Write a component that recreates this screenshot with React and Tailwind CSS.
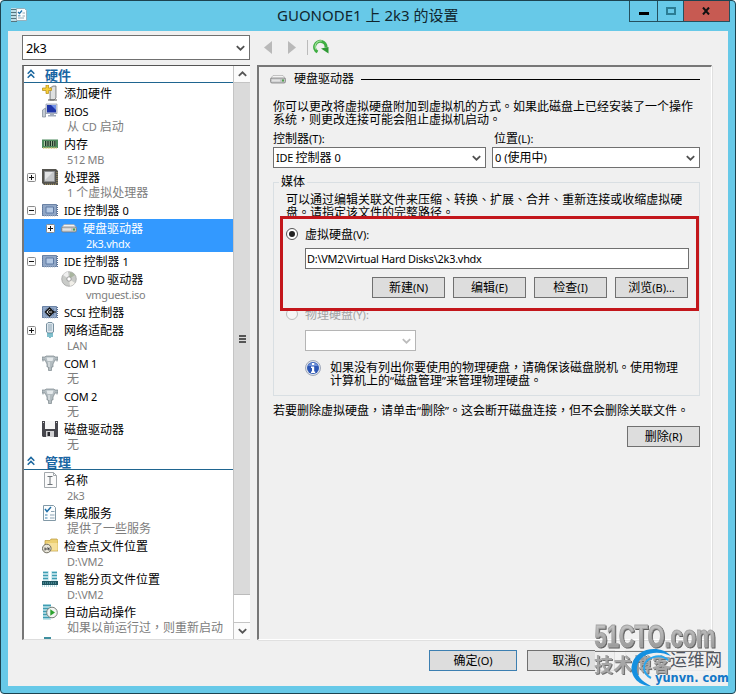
import React from 'react';
import clsx from 'clsx';

/**
 * Mixed-script label. Latin runs are set a little smaller than the CJK glyphs
 * and full-width punctuation is centred in its cell.
 */
function Txt({ children }) {
  return children
    .split(/([，。、]|[\x20-\x7e“”]+)/)
    .filter(Boolean)
    .map((part, i) => {
      if (/^[，。、]$/.test(part)) {
        return (
          <span key={i} className="font-['Noto_Sans_CJK_TC',sans-serif] leading-none" lang="zh-TW">
            {part}
          </span>
        );
      }
      if (/\w{3}|\w \w/.test(part) || /^[A-Z]:/.test(part)) {
        return (
          <span key={i} className="text-[0.91em] leading-none tracking-[-0.25px]">
            {part}
          </span>
        );
      }
      if (/^[\x20-\x7e“”]/.test(part)) {
        return (
          <span key={i} className="text-[0.92em] leading-none">
            {part}
          </span>
        );
      }
      return part;
    });
}

/* ---------- icons ---------- */

const Svg = ({ children, size = 16 }) => (
  <svg width={size} height={size} viewBox="0 0 16 16" className="block shrink-0">
    {children}
  </svg>
);

const AddIcon = () => (
  <Svg>
    <path d="M8 3l3-2h3v12l-2 2H8z" fill="#c9cdcd" stroke="#777" strokeWidth=".8" />
    <path d="M10 3v11M12 2v12" stroke="#f4f4f4" />
    <path d="M6 15h9" stroke="#555" />
    <path d="M4 0h2.500v3h3v2.500h-3v3H4v-3H.5V3H4z" fill="#f7cf3a" stroke="#b58a10" strokeWidth=".7" />
  </Svg>
);

const BiosIcon = () => (
  <Svg>
    <path d="M.5 7l3-2v9h-3z" fill="#c5ccd4" stroke="#7c8794" strokeWidth=".7" />
    <path d="M4 1h11v9.500H4z" fill="#d7dce6" stroke="#8a93a8" strokeWidth=".7" />
    <path d="M5 2h9v7.500H5z" fill="#1f35a8" />
    <path d="M9 2h5v5z" fill="#6f8fe8" />
    <path d="M8 10.500h4V12h2v1.500H6V12h2z" fill="#a4adbc" />
  </Svg>
);

const MemoryIcon = () => (
  <Svg>
    <path d="M0 3.500h16V12H0z" fill="#4d8a5c" />
    <path d="M1 12h14" stroke="#d6c878" strokeWidth="1.400" strokeDasharray="1 .6" />
    <path d="M2 5h12v5H2z" fill="#a9c6a0" />
    <path d="M3 5h1.400v5H3zM5.300 5h1.400v5H5.300zM7.600 5H9v5H7.600zM9.900 5h1.400v5H9.900zM12.200 5h1.400v5h-1.400z" fill="#1c3325" />
  </Svg>
);

const CpuIcon = () => (
  <Svg>
    <path d="M0 0h14l2 2v14H2l-2-2z" fill="#55544f" />
    <path d="M15 3v12M3 15.300h12" stroke="#b3a26a" strokeDasharray="1 1" />
    <path d="M2.500 2.500h10v10h-10z" fill="#c4c6c8" stroke="#8d8f91" />
    <path d="M3 3h8L3 11z" fill="#e2e3e4" />
  </Svg>
);

const ControllerIcon = ({ scsi }) => (
  <Svg>
    <path d="M.5 2.500h14v11H.5z" fill="#91a7c6" stroke="#6b83a6" />
    <path d="M0 3v11M15.500 3v11" stroke="#566c8d" strokeDasharray="1 1" />
    <path d="M2 14h12" stroke="#b6c3d6" strokeDasharray="1 1" />
    <path d="M4 5h7.500v6H4z" fill="#b4c9e4" stroke="#5f7ba4" />
    {scsi && (
      <>
        <path d="M7.500 4L11.500 8l-4 4-4-4z" fill="#fff" stroke="#111" strokeWidth="1.500" />
        <path d="M9 6.800a1.500 1.500 0 1 0 0 2.400M8 8h6" fill="none" stroke="#111" strokeWidth="1.200" />
      </>
    )}
  </Svg>
);

const DiskIcon = () => (
  <Svg>
    <path d="M3 4.500h10l2.500 3H.5z" fill="#f3f3f3" stroke="#a2a2a2" strokeWidth=".6" />
    <rect x=".5" y="7" width="15" height="5" rx="1.500" fill="#c3c5c6" stroke="#777" strokeWidth=".7" />
    <path d="M2 8.500h8v2H2z" fill="#e3e3e3" />
    <path d="M12 8.500h2v2h-2z" fill="#4fa24a" />
  </Svg>
);

const DvdIcon = () => (
  <Svg>
    <circle cx="8" cy="8" r="7.300" fill="#c9cbc8" stroke="#9c9c9c" strokeWidth=".7" />
    <path d="M8 8L2 4a7 7 0 0 1 5-3.300z" fill="#efefef" />
    <path d="M8 8l6 4a7 7 0 0 1-5 3z" fill="#f1efe9" />
    <path d="M8 8l1-7a7 7 0 0 1 5 3z" fill="#a9b59f" />
    <circle cx="8" cy="8" r="2.200" fill="#fff" stroke="#8a8a8a" strokeWidth=".8" />
  </Svg>
);

const NetworkIcon = () => (
  <Svg>
    <path d="M4.500 2L6 .5h4L11.500 2v8l-1.500 1H6l-1.500-1z" fill="#dde7ee" stroke="#78909f" />
    <path d="M7 2v7M9 2v7" stroke="#8fa5b3" />
    <path d="M6 11v4M8 11v5M10 11v4" stroke="#3d9cb0" strokeWidth="1.300" />
  </Svg>
);

const ComIcon = () => (
  <Svg>
    <path d="M0 2h3l1-1h8l1 1h3v3h-3l-2 4v3H9.500v3.500h-3V12H5V9L3 5H0z" fill="#b3bcc0" stroke="#7b878c" strokeWidth=".7" />
    <path d="M4.500 2.500h7l-1 3.500h-5z" fill="#e4e9eb" />
    <path d="M7 7v5" stroke="#eef1f2" />
    <path d="M1 5v1.500M15 5v1.500" stroke="#8d999e" />
  </Svg>
);

const FloppyIcon = () => (
  <Svg>
    <path d="M0 0h16v16H1l-1-1z" fill="#46464c" />
    <path d="M3 0h10v8H3z" fill="#f6f6f6" />
    <path d="M4 10h8v6H4z" fill="#d2d2d4" />
    <path d="M5.500 11h2.500v4H5.500z" fill="#2b2b30" />
    <path d="M1 1h1v1H1zM14 1h1v1h-1z" fill="#ddd" />
  </Svg>
);

const NameIcon = () => (
  <Svg>
    <path d="M2.500.5h9l3 3v12h-12z" fill="#fbfbfb" stroke="#a3a8ac" />
    <path d="M11.500.5v3h3" fill="none" stroke="#a3a8ac" />
    <path d="M5.500 4.500h5M5.500 12.500h5M8 4.500v8" stroke="#6b7176" />
  </Svg>
);

const ServicesIcon = () => (
  <Svg>
    <path d="M1.500.5h10l2 2v13h-12z" fill="#fbfdfe" stroke="#8299a6" />
    <path d="M3 4l2 2.500L9 2" fill="none" stroke="#1f6fa8" strokeWidth="1.500" />
    <path d="M9 6.500h3.500M8 10h4.500M8 13h4.500" stroke="#8ba3b3" />
    <path d="M3 9h2.500v2H3zM3 12h2.500v2H3z" fill="#9cc0d6" />
  </Svg>
);

const CheckpointIcon = () => (
  <Svg>
    <path d="M3 2.500h5l1-1.500h6l1 1.500V13H3z" fill="#eccf72" stroke="#b8963a" strokeWidth=".7" />
    <path d="M4 5h11.500v7.500H4z" fill="#f6e09a" />
    <circle cx="4.800" cy="10.500" r="4.300" fill="#e9e6da" stroke="#6d6a5c" />
    <path d="M3 12.500V9.500M3 11h4l-1.500-1.500M7 12.500v-3" fill="none" stroke="#444" />
  </Svg>
);

const PagingIcon = () => (
  <Svg>
    <path d="M1 0h6v10H1zM9 0h6v10H9z" fill="#d6eef3" />
    <path d="M1 1.500h5M1 4.500h5M1 7.500h5M10 1.500h5M10 4.500h5M10 7.500h5" stroke="#3f9db2" strokeWidth="1.500" />
    <path d="M0 10h16v4H0z" fill="#1f5560" />
    <path d="M1 12h14M0 15h16" stroke="#6fb9c6" strokeDasharray="1 1" />
  </Svg>
);

const AutoStartIcon = () => (
  <Svg>
    <path d="M1 0h8v16H1z" fill="#c2e4ea" />
    <path d="M1 1.500h8M1 4.500h6M1 7.500h5M1 10.500h5M1 13.500h7" stroke="#3f9db2" strokeWidth="1.500" />
    <circle cx="10" cy="8.500" r="5.300" fill="#f3f5f3" stroke="#76807a" />
    <path d="M8.300 5.300l4.700 3.200-4.700 3.200z" fill="#2ba32e" />
  </Svg>
);

const InfoIcon = () => (
  <Svg>
    <circle cx="8" cy="8" r="7.500" fill="#dfe4ec" stroke="#8b95ab" strokeWidth=".8" />
    <circle cx="8" cy="8" r="6" fill="#2c56b4" />
    <path d="M3 6a5.500 5.500 0 0 1 10 0z" fill="#6d90d8" />
    <path d="M7 3h2.200v2H7zM6 6.500h3.200v5h1V13H6v-1.500h1V8H6z" fill="#fff" />
  </Svg>
);

const SettingsIcon = () => (
  <Svg>
    <path d="M0 1h6v14H0z" fill="#bcdde6" />
    <path d="M0 2.500h6M0 5.500h6M0 8.500h6M0 11.500h6M0 14.500h6" stroke="#55747e" />
    <path d="M5.500 1.500h8l2 2v10h-10z" fill="#fbfdfe" stroke="#8fa5af" strokeWidth=".8" />
    <path d="M7 5l1.500 1.500L11 3.500" fill="none" stroke="#1f6fa8" strokeWidth="1.300" />
    <path d="M11.500 6h2.500M11.500 9h2.500M7 11h6" stroke="#94a9b4" />
    <path d="M7 8h2.500v1.500H7z" fill="#7db0cc" />
  </Svg>
);

const RefreshIcon = () => (
  <Svg>
    <path d="M4.500 13A5.700 5.700 0 1 1 13 8.500" fill="none" stroke="#3fae42" strokeWidth="3" />
    <path d="M3.200 10.500A5.500 5.500 0 0 1 9 2" fill="none" stroke="#a2e09c" strokeWidth="1.200" />
    <path d="M8 9.500l7.500-1.500v6.500z" fill="#2f9a35" />
  </Svg>
);

const Chevron = ({ color = '#505050', up }) => (
  <svg width="9" height="6" viewBox="0 0 9 6" className="block shrink-0">
    <path d={up ? 'M.8 4.800L4.500 1.300l3.700 3.500' : 'M.8 1.200L4.500 4.700l3.700-3.500'} fill="none" stroke={color} strokeWidth="1.800" />
  </svg>
);

/* ---------- controls ---------- */

const Combo = ({ value, disabled, className }) => (
  <div
    className={clsx(
      'flex items-center justify-between border bg-white pl-[2px] pr-[4px]',
      disabled ? 'border-[#b5b5b5]' : 'border-[#707070]',
      className,
    )}
  >
    <span className="whitespace-nowrap">
      <Txt>{value}</Txt>
    </span>
    <Chevron color={disabled ? '#bcbcbc' : '#505050'} />
  </div>
);

const Button = ({ children, className }) => (
  <button
    className={clsx(
      'flex h-[21px] items-center justify-center whitespace-pre border bg-[#dddddd]',
      className || 'w-[73px] border-[#707070]',
    )}
  >
    <span>
      <Txt>{children}</Txt>
    </span>
  </button>
);

const Radio = ({ checked, disabled }) => (
  <span
    className={clsx(
      'mb-[2px] flex size-[12px] shrink-0 items-center justify-center rounded-full border',
      disabled ? 'border-[#bcbcbc] bg-[#f6f6f6]' : 'border-[#555] bg-white',
    )}
  >
    {checked && <span className="size-[6px] rounded-full bg-[#222]" />}
  </span>
);

const Expander = ({ open }) => (
  <svg width="9" height="9" viewBox="0 0 9 9" className="block">
    <rect x=".5" y=".5" width="8" height="8" rx="1" fill="#fafafa" stroke="#8a8a8a" />
    <path d={open ? 'M2 4.500h5' : 'M2 4.500h5M4.500 2v5'} stroke="#111" />
  </svg>
);

// Body copy sits on a tight 13px grid, one block per line
const Lines = ({ lines }) =>
  lines.map((line) => (
    <span key={line} className="block h-[13px] whitespace-nowrap leading-[13px]">
      <Txt>{line}</Txt>
    </span>
  ));

/* ---------- settings tree ---------- */

const HARDWARE = [
  { title: '添加硬件', icon: <AddIcon /> },
  { title: 'BIOS', sub: '从 CD 启动', icon: <BiosIcon /> },
  { title: '内存', sub: '512 MB', icon: <MemoryIcon /> },
  { title: '处理器', sub: '1 个虚拟处理器', icon: <CpuIcon />, node: 'closed' },
  { title: 'IDE 控制器 0', icon: <ControllerIcon />, node: 'open' },
  { title: '硬盘驱动器', sub: '2k3.vhdx', icon: <DiskIcon />, node: 'closed', nested: true, selected: true },
  { title: 'IDE 控制器 1', icon: <ControllerIcon />, node: 'open' },
  { title: 'DVD 驱动器', sub: 'vmguest.iso', icon: <DvdIcon />, nested: true },
  { title: 'SCSI 控制器', icon: <ControllerIcon scsi /> },
  { title: '网络适配器', sub: 'LAN', icon: <NetworkIcon />, node: 'closed' },
  { title: 'COM 1', sub: '无', icon: <ComIcon /> },
  { title: 'COM 2', sub: '无', icon: <ComIcon /> },
  { title: '磁盘驱动器', sub: '无', icon: <FloppyIcon /> },
];

const MANAGEMENT = [
  { title: '名称', sub: '2k3', icon: <NameIcon /> },
  { title: '集成服务', sub: '提供了一些服务', icon: <ServicesIcon /> },
  { title: '检查点文件位置', sub: 'D:\\VM2', icon: <CheckpointIcon /> },
  { title: '智能分页文件位置', sub: 'D:\\VM2', icon: <PagingIcon /> },
  { title: '自动启动操作', sub: '如果以前运行过，则重新启动', icon: <AutoStartIcon /> },
];

const TreeHeader = ({ children }) => (
  <div className="h-[18px] shrink-0">
    <div className="flex h-[17px] items-center border-b border-[#1f6590] pl-[3px]">
      <svg width="8" height="10" viewBox="0 0 8 10" className="block">
        <path d="M.7 4.700L4 1.400l3.300 3.300M.7 8.700L4 5.400l3.300 3.300" fill="none" stroke="#1b679f" strokeWidth="1.500" />
      </svg>
      <span className="ml-[10px] pt-px text-[13px] font-bold text-[#1a66a3]">{children}</span>
    </div>
  </div>
);

const TreeItem = ({ title, sub, icon, node, nested, selected }) => (
  <div className={clsx('shrink-0 whitespace-nowrap', nested && 'pl-[19px]', selected && 'bg-[#3399ff] text-white')}>
    <div className="flex h-[18px] items-center">
      <div className="w-[18px] shrink-0 pl-[3px]">{node && <Expander open={node === 'open'} />}</div>
      {icon}
      <span className="ml-[6px] pt-px">
        <Txt>{title}</Txt>
      </span>
    </div>
    {sub && (
      <div className={clsx('h-[15px] pl-[43px] leading-[13px]', selected ? 'text-white' : 'text-[#7d7d7d]')}>
        <Txt>{sub}</Txt>
      </div>
    )}
  </div>
);

const Scrollbar = () => (
  <div className="flex w-[17px] shrink-0 flex-col border-l border-[#c4c4c4] bg-white">
    <div className="flex h-[17px] items-center justify-center border-b border-[#c4c4c4] bg-[#fbfbfb]">
      <Chevron up color="#555" />
    </div>
    <div className="flex h-[512px] flex-col items-center justify-center gap-px border-b border-[#bbb] bg-[#dadada]">
      <span className="h-[2px] w-[7px] bg-[#555]" />
      <span className="h-[2px] w-[7px] bg-[#555]" />
      <span className="h-[2px] w-[7px] bg-[#555]" />
    </div>
    <div className="flex-1" />
    <div className="flex h-[17px] items-center justify-center border-t border-[#c4c4c4] bg-[#fbfbfb]">
      <Chevron color="#555" />
    </div>
  </div>
);

const SettingsTree = () => (
  <div className="flex h-[575px] w-[228px] shrink-0 overflow-hidden border-l-2 border-t border-b border-l-[#777] border-t-[#555] border-b-[#ddd] bg-white">
    <div className="flex min-w-0 flex-1 flex-col overflow-hidden">
      <TreeHeader>硬件</TreeHeader>
      {HARDWARE.map((item) => (
        <TreeItem key={item.title} {...item} />
      ))}
      <TreeHeader>管理</TreeHeader>
      {MANAGEMENT.map((item) => (
        <TreeItem key={item.title} {...item} />
      ))}
      <div className="ml-[20px] mt-px h-[2px] w-[7px] shrink-0 bg-[#3f8f9f]" />
    </div>
    <Scrollbar />
  </div>
);

/* ---------- right-hand page ---------- */

const MediaGroup = () => (
  <div className="mt-[5px] w-[427px]">
    <div className="flex h-[18px] items-center">
      <span className="h-px w-[6px] bg-[#d9dfe3]" />
      <span className="px-[2px]">媒体</span>
      <span className="h-px flex-1 bg-[#d9dfe3]" />
    </div>
    <div className="-mt-[9px] h-[214px] border border-t-0 border-[#d9dfe3] pt-[11px]">
      <p className="h-[23px] pl-[12px]">
        <Lines
          lines={['可以通过编辑关联文件来压缩、转换、扩展、合并、重新连接或收缩虚拟硬', '盘。请指定该文件的完整路径。']}
        />
      </p>
      <div className="relative ml-[6px] h-[95px] w-[419px] border-3 border-[#c3161b] bg-[#f0f0f0] pl-[3px] pt-[8px]">
        <div className="flex h-[16px] items-center gap-[7px]">
          <Radio checked />
          <span>
            <Txt>虚拟硬盘(V):</Txt>
          </span>
        </div>
        <div className="ml-[19px] mt-[5px] flex h-[21px] w-[384px] items-center border border-[#707070] bg-white pl-[1px]">
          <span>
            <Txt>{'D:\\VM2\\Virtual Hard Disks\\2k3.vhdx'}</Txt>
          </span>
        </div>
        <div className="ml-[86px] mt-[8px] flex gap-[8px]">
          <Button>新建(N)</Button>
          <Button>编辑(E)</Button>
          <Button>检查(I)</Button>
          <Button>浏览(B)...</Button>
        </div>
      </div>
      <div className="-mt-[4px] flex h-[16px] items-center gap-[7px] pl-[12px] text-[#a3a3a3]">
        <Radio disabled />
        <span>
          <Txt>物理硬盘(Y):</Txt>
        </span>
      </div>
      <Combo value="" disabled className="ml-[31px] mt-[7px] h-[21px] w-[111px]" />
      <div className="mt-[9px] flex pl-[31px]">
        <InfoIcon />
        <p className="ml-[9px] mt-px">
          <Lines
            lines={['如果没有列出你要使用的物理硬盘，请确保该磁盘脱机。使用物理', '计算机上的“磁盘管理”来管理物理硬盘。']}
          />
        </p>
      </div>
    </div>
  </div>
);

const DiskPage = () => (
  <div className="ml-[7px] h-[575px] w-[455px] shrink-0 border-l-2 border-t-2 border-r border-b border-l-[#777] border-t-[#777] border-r-white border-b-white pl-[14px] pt-[4px] shadow-[1px_1px_0_#e0e0e0]">
    <div className="-ml-[3px] flex h-[16px] items-center">
      <DiskIcon />
      <span className="ml-[8px]">硬盘驱动器</span>
      <span className="ml-[7px] h-px w-[339px] bg-black" />
    </div>
    <p className="mt-[13px]">
      <Lines
        lines={['你可以更改将虚拟硬盘附加到虚拟机的方式。如果此磁盘上已经安装了一个操作', '系统，则更改连接可能会阻止虚拟机启动。']}
      />
    </p>
    <div className="mt-[4px] flex gap-[6px]">
      <div className="w-[213px]">
        <div className="h-[17px] leading-[17px]">
          <Txt>控制器(T):</Txt>
        </div>
        <Combo value="IDE 控制器 0" className="h-[21px]" />
      </div>
      <div className="w-[208px]">
        <div className="h-[17px] pl-[2px] leading-[17px]">
          <Txt>位置(L):</Txt>
        </div>
        <Combo value="0 (使用中)" className="h-[21px]" />
      </div>
    </div>
    <MediaGroup />
    <p className="mt-[7px] h-[16px] whitespace-nowrap leading-[16px]">
      <Txt>若要删除虚拟硬盘，请单击“删除”。这会断开磁盘连接，但不会删除关联文件。</Txt>
    </p>
    <div className="mt-[7px] flex w-[427px] justify-end">
      <Button>删除(R)</Button>
    </div>
  </div>
);

/* ---------- window chrome ---------- */

const TitleBar = () => (
  <div className="flex h-[30px] items-start">
    <div className="ml-[10px] mt-[6px]">
      <SettingsIcon />
    </div>
    <h1 className="ml-[250px] flex-1 whitespace-nowrap text-[15px] leading-[28px] text-[#10262e]">GUONODE1 上 2k3 的设置</h1>
    <div className="mr-[5px] flex h-[21px] border border-t-0 border-[#24505e]">
      <div className="flex w-[28px] items-center justify-center border-r border-[#24505e]">
        <span className="mt-[4px] h-[3px] w-[10px] bg-black" />
      </div>
      <div className="flex w-[26px] items-center justify-center border-r border-[#24505e]">
        <span className="h-[8px] w-[10px] border-2 border-[#2b7c93]" />
      </div>
      <div className="flex w-[45px] items-center justify-center bg-[#c75a52]">
        <svg width="8" height="8" viewBox="0 0 8 8" className="mr-[1px]">
          <path d="M1 .5l6 7M7 .5l-6 7" stroke="#111" strokeWidth="2" />
        </svg>
      </div>
    </div>
  </div>
);

const Toolbar = () => (
  <div className="flex h-[34px] items-start pl-[14px] pt-[4px]">
    <Combo value="2k3" className="h-[25px] w-[228px] pl-[3px] text-[14px]" />
    <div className="ml-[13px] flex h-[24px] items-center">
      <svg width="9" height="13" viewBox="0 0 9 13">
        <path d="M9 0v13L1 6.500z" fill="#b9b9b9" />
      </svg>
      <svg width="9" height="13" viewBox="0 0 9 13" className="ml-[16px]">
        <path d="M0 0v13l8-6.500z" fill="#b9b9b9" />
      </svg>
      <span className="ml-[10px] mr-[5px] h-[15px] w-px bg-[#bbb]" />
      <RefreshIcon />
    </div>
  </div>
);

const Watermark = () => (
  <svg width="142" height="68" viewBox="594 620 142 68" className="absolute left-[594px] top-[620px]">
    <defs>
      <linearGradient id="metal" x1="0" y1="0" x2="0" y2="1">
        <stop offset="0" stopColor="#cfcfcf" />
        <stop offset="1" stopColor="#8e8e8e" />
      </linearGradient>
    </defs>
    <rect x="595" y="649" width="119" height="24" fill="#f2f2f2" opacity=".85" />
    <path d="M595 651.500h119" stroke="#777" />
    <text
      x="594.500"
      y="647"
      textLength="121"
      lengthAdjust="spacingAndGlyphs"
      fontFamily="'Liberation Sans Narrow','Liberation Sans',sans-serif"
      fontWeight="bold"
      fontSize="31"
      fill="url(#metal)"
      stroke="#a5a5a5"
      strokeWidth="1"
      className="drop-shadow-[1.5px_1.5px_0_#5f5f5f]"
    >
      51CTO.com
    </text>
    <text
      x="594"
      y="672"
      textLength="77"
      fontFamily="'Noto Sans CJK SC',sans-serif"
      fontWeight="bold"
      fontSize="19"
      fill="#a6a6a6"
      className="drop-shadow-[1px_1px_0_#707070]"
    >
      技术博客
    </text>
    <path d="M671 656C661 644 634 647 631.500 667C631 678 640 686 651 686C641 681 636 675 637 667C639 653 657 649 671 656z" fill="#1590e0" />
    <path d="M668 660c-8-7-23-3-24 7c0 5 3 9 7 11" fill="none" stroke="#2ba7ee" strokeWidth="2" />
    <text x="670" y="666" textLength="52" fontFamily="'Noto Sans CJK SC',sans-serif" fontSize="17" fill="#4f5560">运维网</text>
    <text x="655" y="682" textLength="74" lengthAdjust="spacingAndGlyphs" fontFamily="'DejaVu Sans',sans-serif" fontWeight="bold" fontSize="12" fill="#1478c8">yunvn. com</text>
  </svg>
);

export default function App() {
  return (
    <div className="h-[694px] w-[736px] bg-white">
      <div className="relative h-[694px] w-[736px] overflow-hidden rounded-[4px] border border-[#1c4350] bg-[#67c9e8] font-['Noto_Sans','Noto_Sans_CJK_SC',sans-serif] text-[12px] leading-[16px] text-black">
        <TitleBar />
        <div className="mx-[7px] h-[655px] bg-[#f0f0f0]">
          <Toolbar />
          <div className="flex pl-[14px]">
            <SettingsTree />
            <DiskPage />
          </div>
          <div className="mt-[10px] flex gap-[10px] pl-[421px]">
            <Button className="w-[88px] border-[#3c7fb1]">确定(O)</Button>
            <Button className="w-[88px] border-[#707070]">取消(C)</Button>
            <div className="h-[21px] w-[88px] border border-[#b5b5b5] bg-[#dddddd]" />
          </div>
        </div>
        <div className="absolute -left-px -top-px">
          <Watermark />
        </div>
      </div>
    </div>
  );
}
